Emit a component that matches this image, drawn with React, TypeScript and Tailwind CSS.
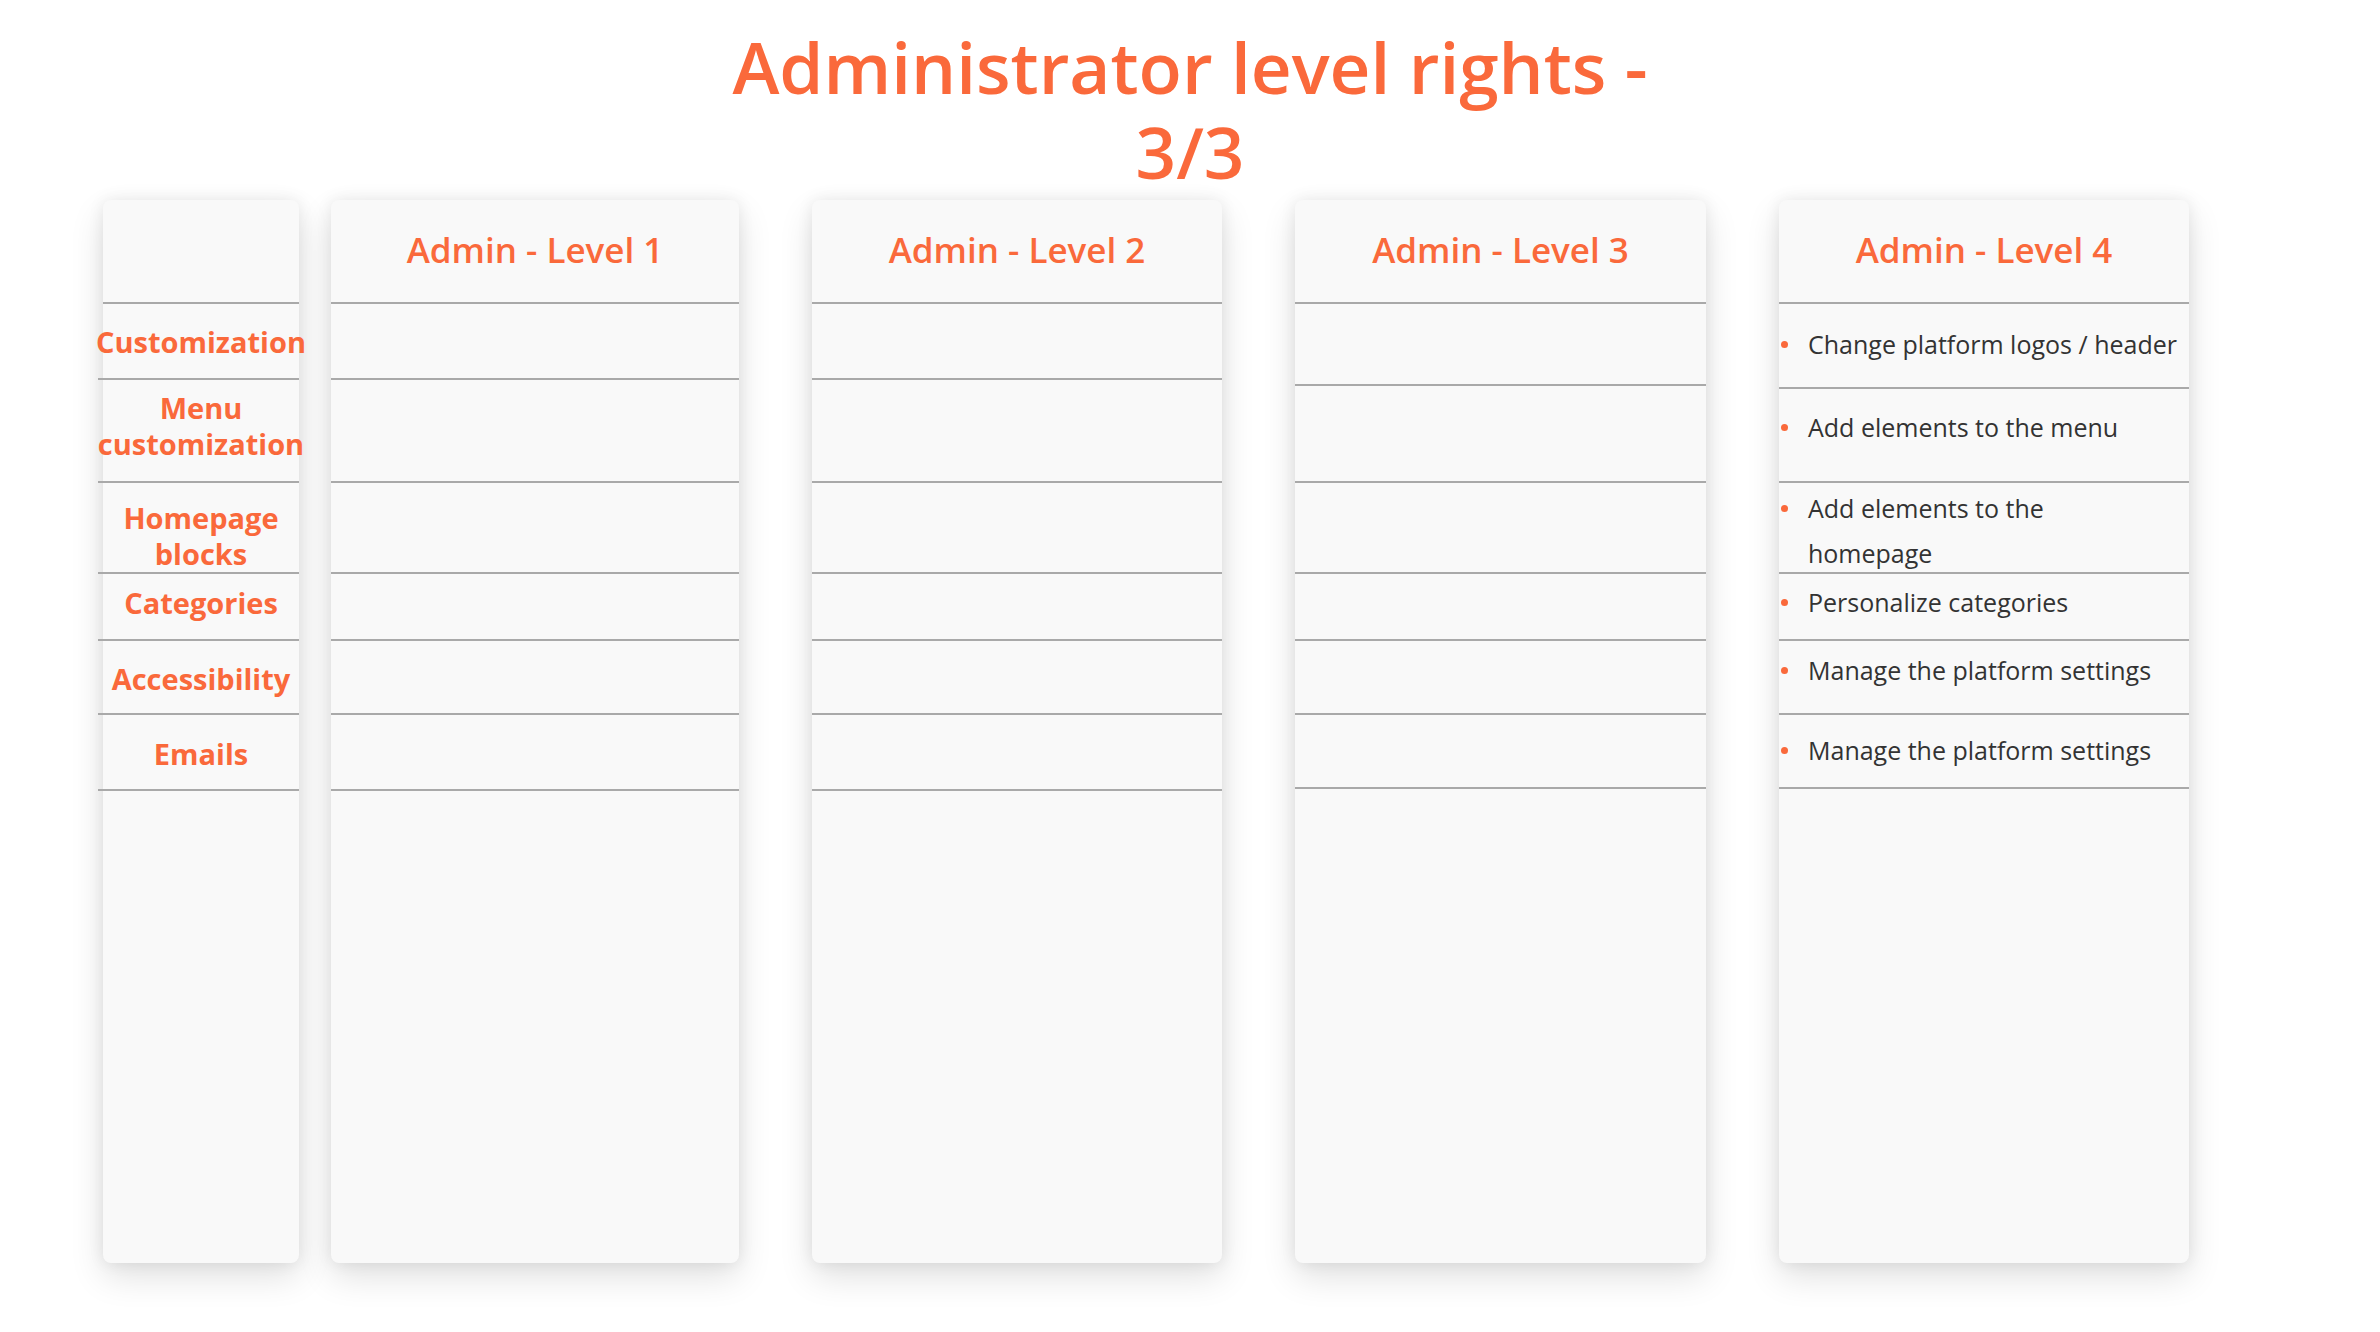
import React from 'react'

type Row = { h: number; pt: number }

const orange = 'text-[#fa693b]'

// row heights (incl. bottom rule) and top padding of the text, per column
const labelRows: (Row & { text: string[] })[] = [
  { h: 76, pt: 20, text: ['Customization'] },
  { h: 103, pt: 10, text: ['Menu', 'customization'] },
  { h: 91, pt: 17, text: ['Homepage', 'blocks'] },
  { h: 67, pt: 11, text: ['Categories'] },
  { h: 74, pt: 20, text: ['Accessibility'] },
  { h: 76, pt: 21, text: ['Emails'] },
]

const plainRows: Row[][] = [
  [76, 103, 91, 67, 74, 76].map((h) => ({ h, pt: 0 })),
  [76, 103, 91, 67, 74, 76].map((h) => ({ h, pt: 0 })),
  [82, 97, 91, 67, 74, 74].map((h) => ({ h, pt: 0 })),
]

const level4: (Row & { text: string[] })[] = [
  { h: 85, pt: 18, text: ['Change platform logos / header'] },
  { h: 94, pt: 16, text: ['Add elements to the menu'] },
  { h: 91, pt: 3, text: ['Add elements to the', 'homepage'] },
  { h: 67, pt: 6, text: ['Personalize categories'] },
  { h: 74, pt: 7, text: ['Manage the platform settings'] },
  { h: 74, pt: 13, text: ['Manage the platform settings'] },
]

const cardCls =
  'h-[1063px] shrink-0 rounded-lg bg-[#f9f9f9] shadow-[0_14px_34px_rgba(0,0,0,0.12),0_0_16px_rgba(0,0,0,0.08)]'

function Header({ title }: { title?: string }) {
  return (
    <div className="flex h-[104px] items-center justify-center border-b-2 border-[#a9a9a9] pb-[4px]">
      {title && (
        <span className={`text-[35px] font-semibold leading-none ${orange}`}>
          {title}
        </span>
      )}
    </div>
  )
}

function PlainColumn({ title, rows, w }: { title: string; rows: Row[]; w: string }) {
  return (
    <div className={`${cardCls} ${w}`}>
      <Header title={title} />
      {rows.map((r, i) => (
        <div
          key={i}
          className="border-b-2 border-[#a9a9a9]"
          style={{ height: r.h }}
        />
      ))}
    </div>
  )
}

export default function App() {
  return (
    <div className="min-h-[1332px] w-[2380px] bg-white font-['Open_Sans',sans-serif]">
      {/* Title */}
      <h1
        className={`mx-auto w-[1000px] pt-[24px] text-center text-[71px] font-semibold leading-[85px] ${orange}`}
      >
        <div className="h-[85px]">Administrator level rights -</div>
        <div className="h-[85px]">3/3</div>
      </h1>

      {/* Columns */}
      <div className="mt-[6px] flex items-start pl-[103px]">
        {/* Labels */}
        <div className={`${cardCls} w-[196px]`}>
          <Header />
          {labelRows.map((r, i) => (
            <div
              key={i}
              className="-ml-[5px] border-b-2 border-[#a9a9a9]"
              style={{ height: r.h, paddingTop: r.pt }}
            >
              {r.text.map((t) => (
                <div
                  key={t}
                  className={`-mx-3 whitespace-nowrap pl-[5px] text-center text-[29px] font-bold leading-[36px] ${orange}`}
                >
                  {t}
                </div>
              ))}
            </div>
          ))}
        </div>

        <div className="ml-[32px]">
          <PlainColumn title="Admin - Level 1" rows={plainRows[0]} w="w-[408px]" />
        </div>
        <div className="ml-[73px]">
          <PlainColumn title="Admin - Level 2" rows={plainRows[1]} w="w-[410px]" />
        </div>
        <div className="ml-[73px]">
          <PlainColumn title="Admin - Level 3" rows={plainRows[2]} w="w-[411px]" />
        </div>

        {/* Level 4 */}
        <div className={`${cardCls} ml-[73px] w-[410px]`}>
          <Header title="Admin - Level 4" />
          {level4.map((r, i) => (
            <div
              key={i}
              className="flex border-b-2 border-[#a9a9a9]"
              style={{ height: r.h, paddingTop: r.pt }}
            >
              <div className="flex h-[45px] w-[29px] shrink-0 items-center pl-[2px]">
                <span className="h-[7px] w-[7px] rounded-full bg-[#fa693b]" />
              </div>
              <div className="pr-2 text-[25px] leading-[45px] text-[#333333]">
                {r.text.map((t) => (
                  <div key={t} className="whitespace-nowrap">
                    {t}
                  </div>
                ))}
              </div>
            </div>
          ))}
        </div>
      </div>
    </div>
  )
}
